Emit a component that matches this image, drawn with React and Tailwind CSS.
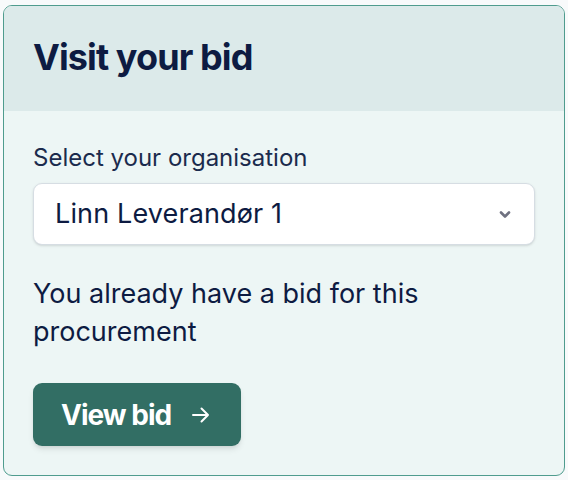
import React from 'react';

const font = { fontFamily: 'Inter, "Noto Sans", sans-serif' };

export default function App() {
  return (
    <div className="w-[568px] h-[480px] bg-[#f8fafb] pt-[5px] pl-[3px]" style={font}>
      <div className="w-[562px] h-[471px] rounded-[9px] border border-[#4f9c8e] overflow-hidden bg-[#edf6f5] flex flex-col">
        <div className="h-[105px] bg-[#dceaea] flex items-center px-[29px] pb-[4px]">
          <h2 className="text-[36px] font-bold tracking-[-0.025em] text-[#0d1b42]">Visit your bid</h2>
        </div>
        <div className="px-[29px] pt-[32px]">
          <label className="block text-[24px] text-[#1b2b4d] leading-[30px]">Select your organisation</label>
          <div className="mt-[10px] h-[62px] rounded-[9px] bg-white border border-[#d6dde3] shadow-sm flex items-center justify-between pl-[21px] pr-[22px]">
            <span className="text-[27px] tracking-[0.005em] text-[#0d1b42]">Linn Leverandør 1</span>
            <svg width="14" height="10" viewBox="0 0 14 10" className="text-[#6f7180]">
              <path d="M3 3.5l4 4 4-4" fill="none" stroke="currentColor" strokeWidth="2.6" strokeLinecap="round" strokeLinejoin="round" />
            </svg>
          </div>
          <p className="mt-[30px] w-[440px] text-[27px] leading-[38px] text-[#0d1b42]">You already have a bid for this procurement</p>
          <button className="mt-[32px] h-[63px] w-[208px] px-[28px] rounded-[9px] bg-[#326e64] shadow-md flex items-center gap-[20px] text-white">
            <span className="text-[28px] font-bold tracking-[-0.035em]">View bid</span>
            <svg width="20" height="18" viewBox="0 0 20 18">
              <path d="M2 9h15M10.5 2.5L17 9l-6.5 6.5" fill="none" stroke="white" strokeWidth="2" strokeLinecap="round" strokeLinejoin="round" />
            </svg>
          </button>
        </div>
      </div>
    </div>
  );
}
